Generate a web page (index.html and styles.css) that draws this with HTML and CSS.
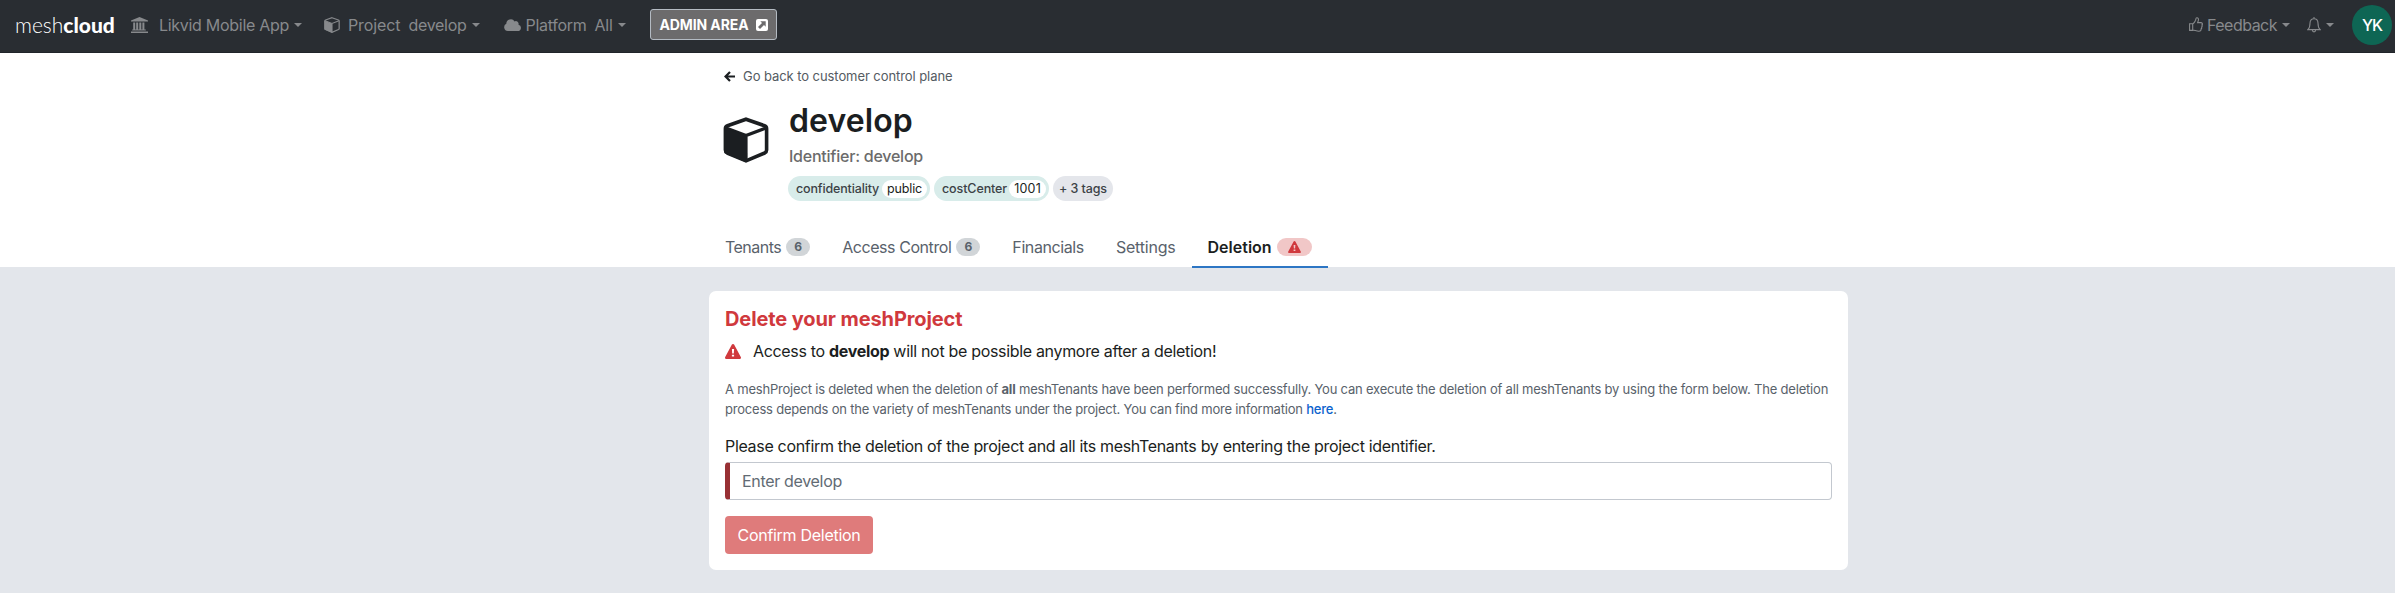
FILE: index.html
```
<!DOCTYPE html>
<html lang="en">
<head>
<meta charset="utf-8">
<title>develop – Deletion</title>
<link rel="stylesheet" href="styles.css">
</head>
<body>
<svg class="defs" width="0" height="0">
  <symbol id="cube" viewBox="0 0 46 46"><path d="M23 2.200 L41.500 8.700 Q43.600 9.500 43.600 11.700 V33 Q43.600 35 41.700 36 L23 43.800 L4.300 36 Q2.400 35 2.400 33 V11.700 Q2.400 9.500 4.500 8.700 Z" fill="none" stroke="currentColor" stroke-width="3.600"/><path d="M3 11 L23 18.500 L43 11" fill="none" stroke="currentColor" stroke-width="3.200"/><path d="M1.500 11 L24.600 19.500 V43.500 L23 45.300 L1.500 36 Z" fill="currentColor"/></symbol>
  <symbol id="warn" viewBox="0 0 16 15"><path fill-rule="evenodd" fill="currentColor" d="M8 0c.5 0 .9.3 1.100.6l6.700 12.500c.5.9-.1 1.900-1.100 1.900H1.300C.3 15-.3 14 .2 13.100L6.900.6C7.100.3 7.500 0 8 0ZM6.900 5l.3 4.500h1.600L9.100 5ZM6.900 10.700v1.900h2.200v-1.900Z"/></symbol>
</svg>
<nav class="navbar">
  <a class="logo"><span class="logo-thin">mesh</span><span class="logo-bold">cloud</span></a>
  <a class="nav-item nav-customer">
    <svg class="ico-bank" viewBox="0 0 17 16" fill="currentColor"><path d="M8.500 0 17 3.400v1H0v-1ZM2.200 5.400h2v7h1v-7h2v7h1.100v-7h2v7h1.100v-7h2v7h1.400v1H1.200v-1h1ZM0 14.500h17V16H0Z"/></svg>
    <span class="t-customer">Likvid Mobile App</span><i class="caret"></i>
  </a>
  <a class="nav-item nav-project">
    <svg class="ico-cube"><use href="#cube"/></svg>
    <span class="t-project">Project</span><span class="t-develop">develop</span><i class="caret"></i>
  </a>
  <a class="nav-item nav-platform">
    <svg class="ico-cloud" viewBox="0 0 17 12" fill="currentColor"><path d="M3.800 12A3.800 3.800 0 0 1 2.300 4.800 4.500 4.500 0 0 1 10.600 2.400 2.800 2.800 0 0 1 14.500 5.700 3.200 3.200 0 0 1 13.800 12Z"/></svg>
    <span class="t-platform">Platform</span><span class="t-all">All</span><i class="caret"></i>
  </a>
  <a class="admin"><span class="t-admin">ADMIN AREA</span>
    <svg class="ico-ext" viewBox="0 0 12 12"><rect width="12" height="12" rx="2" fill="#fff"/><path d="M4.300 2.300h5.400v5.400L8 6 4 10 2 8l4-4Z" fill="#6c6b6c"/></svg>
  </a>
  <div class="nav-right">
    <a class="nav-item">
      <svg class="ico-thumb" viewBox="0 0 14 15" fill="none" stroke="currentColor" stroke-width="1.100"><path d="M.6 6.800H3.700V13.400H.6ZM3.700 7C5.200 6.200 6 4.500 6.600 3.200 6.900 2.300 6.700.8 7.800.7 9.400.6 9.700 2.300 9.300 3.600L8.600 5.600H12C13.700 5.700 13.700 7.600 12.900 8 13.500 8.800 13.200 9.800 12.600 10.100 13 11 12.600 11.800 12 12 12.200 13.300 11.500 14.200 10 14.200 7.500 14.300 6 13.300 3.700 13"/></svg>
      <span class="t-feedback">Feedback</span><i class="caret"></i>
    </a>
    <a class="nav-item nav-bell">
      <svg class="ico-bell" viewBox="0 0 14 16" fill="none" stroke="currentColor" stroke-width="1.100"><path d="M7 0V1.600M.9 12.600C2.500 11.300 3 9.500 3 6.300 3 3.300 4.500 1.700 7 1.700S11 3.300 11 6.300C11 9.500 11.500 11.300 13.100 12.600ZM5.300 12.800C5.400 14.200 6 14.900 7 14.900S8.600 14.200 8.700 12.800"/></svg>
      <i class="caret"></i>
    </a>
    <span class="avatar"><span class="t-yk">YK</span></span>
  </div>
</nav>
<header class="head">
  <div class="container">
    <a class="back"><svg class="ico-arrow" viewBox="0 0 11 11" fill="none" stroke="currentColor" stroke-width="2.200"><path d="M6 .9 1.500 5.500 6 10.100M1.800 5.500H11"/></svg><span class="t-back">Go back to customer control plane</span></a>
    <div class="title-row">
      <svg class="ico-big"><use href="#cube"/></svg>
      <div>
        <h1 class="title"><span class="t-title">develop</span></h1>
        <div class="ident"><span class="t-ident">Identifier: develop</span></div>
        <div class="tags">
          <span class="tag tag-conf"><span class="t-conf">confidentiality</span><b class="tag-value"><span class="t-public">public</span></b></span>
          <span class="tag tag-cost"><span class="t-cost">costCenter</span><b class="tag-value"><span class="t-1001">1001</span></b></span>
          <span class="tag tag-more"><span class="t-more">+ 3 tags</span></span>
        </div>
      </div>
    </div>
    <div class="tabs">
      <a class="tab"><span class="t-tenants">Tenants</span><span class="badge">6</span></a>
      <a class="tab"><span class="t-access">Access Control</span><span class="badge">6</span></a>
      <a class="tab"><span class="t-fin">Financials</span></a>
      <a class="tab"><span class="t-set">Settings</span></a>
      <a class="tab active"><span class="t-del">Deletion</span><span class="badge badge-warn"><svg class="ico-warn-s"><use href="#warn"/></svg></span></a>
    </div>
  </div>
</header>
<main class="card">
  <h2 class="card-title"><span class="t-h2">Delete your meshProject</span></h2>
  <p class="alert"><svg class="ico-warn"><use href="#warn"/></svg><span class="t-alert">Access to <b>develop</b> will not be possible anymore after a deletion!</span></p>
  <p class="info"><span class="t-info1">A meshProject is deleted when the deletion of <b>all</b> meshTenants have been performed successfully. You can execute the deletion of all meshTenants by using the form below. The deletion</span><br><span class="t-info2">process depends on the variety of meshTenants under the project. You can find more information <a class="link">here</a>.</span></p>
  <label class="label"><span class="t-label">Please confirm the deletion of the project and all its meshTenants by entering the project identifier.</span></label>
  <input class="field" type="text" placeholder="Enter develop">
  <button class="confirm"><span class="t-confirm">Confirm Deletion</span></button>
</main>
</body>
</html>
```
FILE: styles.css
```
* { box-sizing: border-box; }
body { margin: 0; height: 593px; overflow: hidden; background: #e3e6eb; color: #1b1e21; font: 16px/24px Inter, "Liberation Sans", sans-serif; }
svg { display: block; flex: none; }
.defs { position: absolute; }
h1, h2, p { margin: 0; }
span { white-space: nowrap; }
.navbar { height: 53px; padding: 0 3px 3px 15px; display: flex; align-items: center; background: #292d32; border-bottom: 1px solid #20242a; color: #87898c; }
.logo { width: 101px; color: #fff; font: 21px/24px Lato, sans-serif; display: flex; }
.logo-thin { font-weight: 300; }
.logo-bold { font-weight: 900; }
.nav-item { display: flex; align-items: center; }
.nav-customer { margin-left: 15px; }
.nav-project { margin-left: 22px; }
.nav-platform { margin-left: 24px; }
.caret { margin-left: 5px; border: 4.5px solid transparent; border-top-color: currentColor; border-bottom: 0; }
.ico-bank { width: 17px; height: 16px; margin-right: 11px; }
.ico-cube { width: 16px; height: 16px; margin-right: 8px; }
.ico-cloud { width: 17px; height: 12px; margin-right: 5px; }
.t-customer { letter-spacing: -.29px; }
.t-project { margin-right: 8px; letter-spacing: -.094px; }
.t-develop { letter-spacing: -.3px; }
.t-platform { margin-right: 8px; letter-spacing: -.283px; }
.t-all { letter-spacing: -.266px; }
.t-feedback { letter-spacing: -.516px; }
.t-yk { letter-spacing: -1.070px; }
.admin { width: 127px; height: 31px; margin-left: 24px; padding: 0 8px 0 9px; display: flex; align-items: center; justify-content: space-between; background: #6c6b6c; border: 1px solid #b4bbc3; border-radius: 3px; color: #fff; font-size: 14px; font-weight: 700; letter-spacing: -.113px; }
.ico-ext { width: 12px; height: 12px; }
.nav-right { margin-left: auto; display: flex; align-items: center; }
.ico-thumb { width: 14px; height: 15px; margin-right: 4px; }
.nav-bell { margin-left: 17px; }
.ico-bell { width: 14px; height: 16px; }
.avatar { width: 40px; height: 40px; margin-left: 18px; border-radius: 50%; background: #0e6654; color: #fff; display: flex; align-items: center; justify-content: center; font-weight: 500; }
.head { height: 214px; background: #fff; }
.container { width: 1139px; height: 215px; margin: 0 auto 0 709px; padding: 13px 0 0 15px; display: flex; flex-direction: column; }
.back { display: flex; align-items: center; height: 20px; color: #545b62; font-size: 13px; letter-spacing: -.07px; }
.ico-arrow { width: 11px; height: 11px; margin-right: 8px; color: #1b1e21; }
.title-row { display: flex; padding-top: 15px; }
.ico-big { width: 46px; height: 46px; margin: 16px 19px 0 -1px; }
.title { font-size: 32px; line-height: 40px; font-weight: 600; height: 46px; letter-spacing: .1px; }
.ident { color: #6b6b6b; font-weight: 500; line-height: 24px; margin-top: -3px; letter-spacing: -.235px; }
.title, .ident, .tags { margin-left: 1px; }
.tags { display: flex; gap: 4px; margin-top: 8px; margin-left: 0; }
.tag { height: 25px; border-radius: 13px; display: flex; align-items: center; justify-content: space-between; padding: 0 3px 0 8px; background: #d8ecea; font-size: 12.500px; font-weight: 500; color: #3c4246; }
.t-conf, .t-public { letter-spacing: -.152px; }
.t-cost, .t-more { letter-spacing: -.1px; }
.t-1001 { letter-spacing: .2px; }
.tag-conf { width: 142px; }
.tag-cost { width: 115px; }
.tag-more { width: 60px; background: #e4e6eb; padding: 0 6px; }
.tag-value { height: 18px; border-radius: 9px; background: #fff; padding: 0 5px; line-height: 18px; font-weight: 400; color: #1b1e21; }
.tabs { display: flex; margin: auto 0 0 -15px; height: 41px; color: #59626b; }
.tab { display: flex; align-items: center; padding: 0 16px; height: 41px; border-bottom: 2px solid transparent; }
.t-tenants { letter-spacing: -.53px; }
.t-access { letter-spacing: -.43px; }
.t-fin { letter-spacing: -.4px; }
.t-set { letter-spacing: -.2px; }
.t-del { letter-spacing: 0; }
.active { border-color: #2d76c4; color: #1b1e21; font-weight: 600; }
.badge { width: 24px; height: 18px; margin-left: 5px; border-radius: 9px; background: #d1d5d8; display: flex; align-items: center; justify-content: center; font-size: 12px; font-weight: 700; }
.badge-warn { width: 35px; background: #f1c7c7; color: #d0393d; }
.ico-warn-s { width: 13px; height: 12px; }
.card { width: 1139px; height: 279px; margin: 24px 0 0 709px; padding: 16px; background: #fff; border-radius: 7px; }
.card-title { color: #d0393d; font-size: 20px; line-height: 24px; font-weight: 700; letter-spacing: -.103px; }
.alert { display: flex; align-items: center; margin-top: 8px; height: 24px; letter-spacing: -.32px; }
.ico-warn { width: 16px; height: 15px; margin-right: 12px; }
.alert svg { color: #d0393d; }
.info { margin-top: 16px; color: #59626b; font-size: 13px; line-height: 20px; letter-spacing: -.2px; }
.t-info2 { letter-spacing: -.21px; }
.link { color: #0b63ce; font-weight: 500; }
.label { display: block; margin-top: 15px; letter-spacing: -.322px; }
.field { display: block; width: 1107px; height: 38px; margin-top: 4px; padding: 0 12px; border: 1px solid #c3c8cf; border-left: 5px solid #983034; border-radius: 4px; font: inherit; letter-spacing: -.32px; }
.field::placeholder { color: #626b74; opacity: 1; }
.confirm { display: block; width: 148px; height: 38px; margin-top: 16px; padding: 0; border: 0; border-radius: 4px; background: #df7b7b; color: #fff; font: inherit; letter-spacing: -.285px; }
```
